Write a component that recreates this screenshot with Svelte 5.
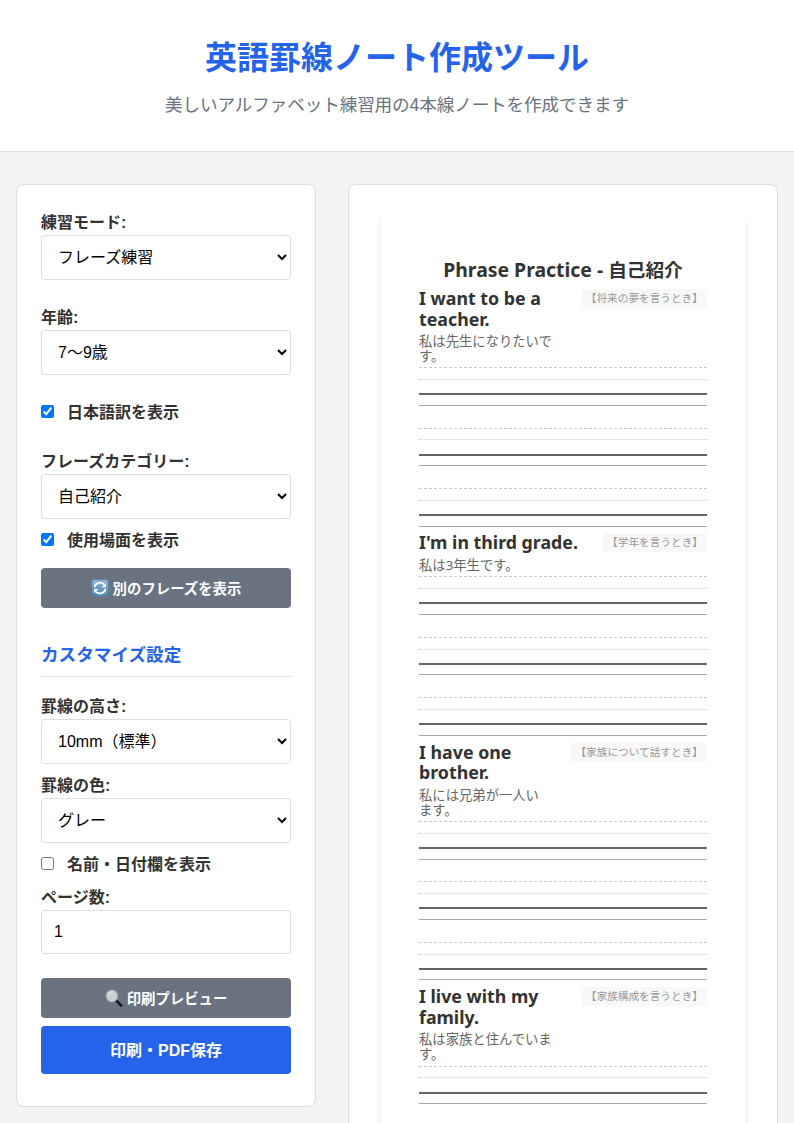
<script>
  let showJa = $state(true);
  let showScene = $state(true);
  let showName = $state(false);
  let pages = $state(1);

  const phrases = [
    { en: 'I want to be a teacher.', ja: '私は先生になりたいです。', scene: '【将来の夢を言うとき】', gap: 0, head: 78.2 },
    { en: "I'm in third grade.", ja: '私は3年生です。', scene: '【学年を言うとき】', gap: 7.5, head: 42.86 },
    { en: 'I have one brother.', ja: '私には兄弟が一人います。', scene: '【家族について話すとき】', gap: 7.8, head: 78.1 },
    { en: 'I live with my family.', ja: '私は家族と住んでいます。', scene: '【家族構成を言うとき】', gap: 7.6, head: 78.4 }
  ];
</script>

<div class="page">
  <header>
    <h1>英語罫線ノート作成ツール</h1>
    <p>美しいアルファベット練習用の4本線ノートを作成できます</p>
  </header>

  <main>
    <section class="panel settings">
      <div class="field">
        <label for="mode">練習モード:</label>
        <select id="mode"><option>フレーズ練習</option></select>
      </div>
      <div class="field age">
        <label for="age">年齢:</label>
        <select id="age"><option>7〜9歳</option></select>
      </div>
      <label class="check ja-check"><input type="checkbox" bind:checked={showJa} /><span>日本語訳を表示</span></label>
      <div class="field category">
        <label for="category">フレーズカテゴリー:</label>
        <select id="category"><option>自己紹介</option></select>
      </div>
      <label class="check scene-check"><input type="checkbox" bind:checked={showScene} /><span>使用場面を表示</span></label>
      <button class="secondary shuffle">
        <svg width="18" height="18" viewBox="0 0 18 18">
          <defs>
            <linearGradient id="tile" x1="0" y1="0" x2="0" y2="1">
              <stop offset="0" stop-color="#8db6d3" />
              <stop offset="1" stop-color="#4f83ad" />
            </linearGradient>
          </defs>
          <rect x="0.6" y="0.6" width="16.8" height="16.8" rx="2.2" fill="url(#tile)" stroke="#557b9d" stroke-width="0.7" />
          <path d="M3.6 8.2 A5.5 5.2 0 0 1 12.9 5.2 M14.4 9.9 A5.5 5.2 0 0 1 5.1 12.9" fill="none" stroke="#fff" stroke-width="1.9" />
          <path d="M14.9 3.9 V8.2 H10.6 Z M3.1 14.2 V9.9 H7.4 Z" fill="#fff" />
        </svg>
        <span>別のフレーズを表示</span>
      </button>

      <h2>カスタマイズ設定</h2>
      <div class="field">
        <label for="height">罫線の高さ:</label>
        <select id="height"><option>10mm（標準）</option></select>
      </div>
      <div class="field color">
        <label for="color">罫線の色:</label>
        <select id="color"><option>グレー</option></select>
      </div>
      <label class="check name-check"><input type="checkbox" bind:checked={showName} /><span>名前・日付欄を表示</span></label>
      <div class="field pages">
        <label for="pages">ページ数:</label>
        <input id="pages" type="number" min="1" max="5" bind:value={pages} />
      </div>
      <button class="secondary preview">
        <svg width="18" height="18" viewBox="0 0 18 18">
          <path d="M10.7 11 L16.3 16.6" stroke="#171a1e" stroke-width="2.5" stroke-linecap="round" />
          <circle cx="6.9" cy="6.9" r="5.9" fill="#ccd0d4" stroke="#a0a4a8" stroke-width="1.2" />
          <path d="M3.2 6.3 A4 4 0 0 1 7 3" fill="none" stroke="#e6e9eb" stroke-width="1.1" />
        </svg>
        <span>印刷プレビュー</span>
      </button>
      <button class="primary"><span>印刷・PDF保存</span></button>
    </section>

    <section class="panel output">
      <div class="sheet">
        <h3><span>Phrase Practice -&nbsp;</span>自己紹介</h3>
        {#each phrases as phrase}
          <article style="margin-top: {phrase.gap}px">
            <div class="head" style="height: {phrase.head}px">
              <div class="words">
                <div class="en">{phrase.en}</div>
                {#if showJa}<div class="ja">{phrase.ja}</div>{/if}
              </div>
              {#if showScene}<span class="scene">{phrase.scene}</span>{/if}
            </div>
            {#each [0, 1, 2] as row (row)}
              <div class="rules">
                <i class="top"></i><i class="mid"></i><i class="base"></i><i class="bottom"></i>
              </div>
            {/each}
          </article>
        {/each}
      </div>
    </section>
  </main>
</div>

<style>
  :global(body) {
    margin: 0;
    background: #f4f4f4;
  }
  .page, .page * { box-sizing: border-box; }
  .page {
    height: 1123px;
    overflow: hidden;
    background: #f4f4f4;
    color: #333;
    font-family: "Liberation Sans", "Noto Sans CJK JP", sans-serif;
    font-size: 16px;
  }
  header {
    height: 152px;
    padding-top: 33px;
    background: #fff;
    border-bottom: 1px solid #ddd;
    text-align: center;
  }
  h1 {
    margin: 0;
    font-size: 32px;
    line-height: 51px;
    color: #2563eb;
  }
  header p {
    margin: 7px 0 0;
    font-size: 17.6px;
    line-height: 28px;
    letter-spacing: -0.12px;
    color: #6b7280;
  }
  main {
    display: grid;
    grid-template-columns: 300px 430px;
    gap: 32px;
    align-items: start;
    padding: 32px 16px;
  }
  .panel {
    background: #fff;
    border: 1px solid #ddd;
    border-radius: 8px;
  }
  .settings {
    height: 923px;
    padding: 25px 24px;
  }
  .field { display: flex; flex-direction: column; }
  .field label {
    height: 25px;
    line-height: 25px;
    font-weight: 700;
  }
  select, input[type='number'] {
    width: 100%;
    height: 45px;
    padding: 0 12px;
    border: 1px solid #ddd;
    border-radius: 4px;
    background: #fff;
    color: #000;
    font: 16px "Liberation Sans", "Noto Sans CJK JP", sans-serif;
  }
  input[type='number'] { height: 44px; }
  .age { margin-top: 25px; }
  .check {
    display: flex;
    align-items: flex-start;
    height: 26px;
    line-height: 26px;
    font-weight: 700;
  }
  .check input {
    width: 13px;
    height: 13px;
    margin: 6px 13px 0 0;
  }
  .check span { padding-top: 1px; }
  .ja-check { margin-top: 24px; }
  .category { margin-top: 24px; }
  .scene-check { margin-top: 8px; }
  button {
    display: flex;
    align-items: center;
    justify-content: center;
    gap: 4px;
    width: 100%;
    border: 0;
    border-radius: 4px;
    color: #fff;
    font-family: inherit;
    font-weight: 700;
  }
  button span { padding-bottom: 2px; }
  .secondary {
    height: 40px;
    background: #6b7280;
    font-size: 14.4px;
  }
  .primary {
    height: 48px;
    margin-top: 8px;
    background: #2563eb;
    font-size: 16px;
  }
  .shuffle { margin-top: 15px; }
  .preview { margin-top: 24px; }
  h2 {
    height: 36px;
    margin: 33px 0 17px;
    border-bottom: 1px solid #ddd;
    font-size: 17.6px;
    line-height: 28px;
    color: #2563eb;
  }
  .color { margin-top: 9px; }
  .name-check { margin-top: 8px; }
  .pages { margin-top: 8px; }
  .output { padding: 32px; }
  .sheet {
    height: 1300px;
    padding: 38px;
    background: #fff;
    box-shadow: 0 4px 6px rgba(0, 0, 0, 0.1);
    font-family: "Noto Sans", "Noto Sans CJK JP", sans-serif;
  }
  h3 {
    margin: 0;
    height: 34px;
    font-size: 18.67px;
    line-height: 30px;
    text-align: center;
  }
  h3 span { font-size: 19.4px; }
  .head {
    display: flex;
    justify-content: space-between;
    align-items: flex-start;
    gap: 22px;
  }
  .words { flex: 1; min-width: 0; }
  .en {
    margin-top: -1px;
    font-size: 17.8px;
    line-height: 20.6px;
    font-weight: 700;
  }
  .ja {
    margin-top: 5px;
    font-size: 13.33px;
    line-height: 14.7px;
    color: #666;
  }
  .scene {
    height: 19px;
    padding: 0 4px;
    border-radius: 2px;
    background: #f8f8f8;
    color: #999;
    font-size: 10.67px;
    line-height: 19px;
    white-space: nowrap;
  }
  .rules {
    display: grid;
    grid-template-rows: 11.8px 14.2px 11.7px 0;
    height: 37.8px;
  }
  .rules + .rules { margin-top: 22.67px; }
  .rules i { height: 0; }
  .top { border-top: 1px dashed #ccc; }
  .mid { border-top: 1px dotted #ccc; }
  .base { border-top: 2px solid #666; }
  .bottom { border-top: 1px solid #aaa; }
</style>
